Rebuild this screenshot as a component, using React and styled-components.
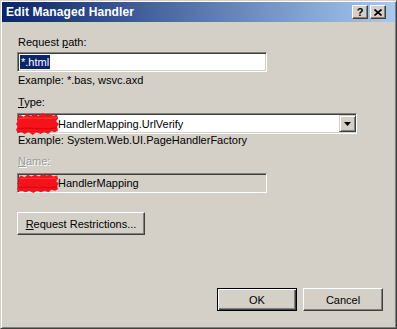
import React from 'react';
import styled, { createGlobalStyle } from 'styled-components';

const FACE = '#d4d0c8';

const GlobalStyle = createGlobalStyle`
  body {
    margin: 0;
    background: ${FACE};
    font-family: "Liberation Sans", Arial, sans-serif;
    font-size: 11px;
    color: #000;
  }
`;

const Window = styled.div`
  box-sizing: border-box;
  width: 397px;
  height: 329px;
  display: flex;
  flex-direction: column;
  background: ${FACE};
  border: 1px solid;
  border-color: ${FACE} #404040 #404040 ${FACE};
  box-shadow: inset 1px 1px #fff, inset -1px -1px #808080;
  padding: 1px;
`;

const TitleBar = styled.div`
  height: 20px;
  display: flex;
  align-items: center;
  justify-content: space-between;
  padding: 0 9px 0 4px;
  background: linear-gradient(to right, #0a246a, #a6caf0);
`;

const TitleText = styled.div`
  color: #fff;
  font-weight: bold;
  font-size: 12px;
  letter-spacing: 0.1px;
`;

const CaptionButtons = styled.div`
  display: flex;
  gap: 2px;
`;

const CaptionButton = styled.div`
  box-sizing: border-box;
  width: 16px;
  height: 14px;
  display: flex;
  align-items: center;
  justify-content: center;
  background: ${FACE};
  border: 1px solid;
  border-color: #fff #404040 #404040 #fff;
  box-shadow: inset -1px -1px #808080;
  font-weight: bold;
  font-size: 11px;
  line-height: 1;
`;

const Body = styled.div`
  flex: 1;
  display: flex;
  flex-direction: column;
  align-items: flex-start;
  padding: 14px 12px 16px 15px;
`;

const Label = styled.div`
  margin-top: ${(p) => p.$gap || 0}px;
  padding-left: 1px;
  height: 13px;
  line-height: 13px;
  color: ${(p) => (p.$disabled ? '#9a9a9a' : '#000')};
  text-shadow: ${(p) => (p.$disabled ? '1px 1px #fff' : 'none')};
`;

const Key = styled.span`
  text-decoration: underline;
`;

const Sunken = styled.div`
  position: relative;
  box-sizing: border-box;
  margin-top: ${(p) => p.$gap || 0}px;
  width: ${(p) => p.$width}px;
  height: ${(p) => p.$height || 20}px;
  display: flex;
  align-items: center;
  background: ${(p) => (p.$disabled ? FACE : '#fff')};
  border: 1px solid;
  border-color: #808080 #fff #fff #808080;
  box-shadow: inset 1px 1px #404040, inset -1px -1px ${FACE};
  padding-left: ${(p) => p.$indent || 2}px;
  white-space: nowrap;
`;

const Selection = styled.span`
  background: #0a246a;
  color: #fff;
  line-height: 14px;
  padding: 0 1px;
`;

const Hint = styled.div`
  margin-top: ${(p) => p.$gap || 0}px;
  padding-left: 1px;
  height: 13px;
  line-height: 13px;
`;

const ComboValue = styled.span`
  flex: 1;
`;

const DropButton = styled.div`
  box-sizing: border-box;
  width: 17px;
  height: 17px;
  display: flex;
  align-items: center;
  justify-content: center;
  background: ${FACE};
  border: 1px solid;
  border-color: ${FACE} #404040 #404040 ${FACE};
  box-shadow: inset 1px 1px #fff, inset -1px -1px #808080;
`;

const Redaction = styled.svg`
  position: absolute;
  left: ${(p) => p.$left}px;
  top: ${(p) => p.$top}px;
`;

const Button = styled.button`
  box-sizing: border-box;
  margin-top: ${(p) => p.$gap || 0}px;
  width: ${(p) => p.$width}px;
  height: 23px;
  padding: 0;
  font-family: inherit;
  font-size: 11px;
  color: #000;
  background: ${FACE};
  border: 1px solid;
  border-color: ${(p) => (p.$default ? '#000' : '#fff #404040 #404040 #fff')};
  box-shadow: ${(p) =>
    p.$default
      ? 'inset 1px 1px #fff, inset -1px -1px #404040, inset -2px -2px #808080'
      : 'inset -1px -1px #808080'};
`;

const Footer = styled.div`
  margin-top: auto;
  align-self: flex-end;
  display: flex;
  gap: 6px;
`;

// red marker scribble hiding the namespace prefix
const Scribble = ({ left, top, width, height }) => (
  <Redaction $left={left} $top={top} width={width} height={height} viewBox="0 0 44 24" preserveAspectRatio="none">
    <path
      d="M1 6 L4 2 L8 4 L11 1 L15 3 L19 1 L23 3 L27 0 L31 2 L35 1 L38 3 L42 2 L43 6 L41 9 L44 12 L42 15 L43 19 L40 21 L36 20 L33 23 L29 21 L25 23 L21 21 L17 24 L13 21 L9 23 L5 21 L2 22 L0 18 L2 15 L0 12 L2 9 Z"
      fill="#f5121a"
    />
    <path d="M3 6 C12 4 24 7 41 5" stroke="#ff3b3b" strokeWidth="1.2" fill="none" />
    <path d="M2 17 C14 15 26 19 42 16" stroke="#e4000c" strokeWidth="1.2" fill="none" />
  </Redaction>
);

export default function App() {
  return (
    <>
      <GlobalStyle />
      <Window>
        <TitleBar>
          <TitleText>Edit Managed Handler</TitleText>
          <CaptionButtons>
            <CaptionButton>?</CaptionButton>
            <CaptionButton>
              <svg width="8" height="7" viewBox="0 0 8 7">
                <path d="M0.5 0.5 L7.5 6.5 M7.5 0.5 L0.5 6.5" stroke="#000" strokeWidth="1.6" />
              </svg>
            </CaptionButton>
          </CaptionButtons>
        </TitleBar>
        <Body>
          <Label>
            Request <Key>p</Key>ath:
          </Label>
          <Sunken $gap={3} $width={250}>
            <Selection>*.html</Selection>
          </Sunken>
          <Hint $gap={2}>Example: *.bas, wsvc.axd</Hint>

          <Label $gap={9}>
            <Key>T</Key>ype:
          </Label>
          <Sunken $gap={4} $width={340} $height={21} $indent={40}>
            <ComboValue>HandlerMapping.UrlVerify</ComboValue>
            <DropButton>
              <svg width="7" height="4" viewBox="0 0 7 4">
                <path d="M0 0 H7 L3.5 4 Z" fill="#000" />
              </svg>
            </DropButton>
            <Scribble left={-2} top={-1} width={43} height={22} />
          </Sunken>
          <Hint>Example: System.Web.UI.PageHandlerFactory</Hint>

          <Label $gap={8} $disabled>
            <Key>N</Key>ame:
          </Label>
          <Sunken $gap={5} $width={250} $disabled $indent={40}>
            HandlerMapping
            <Scribble left={-1} top={0} width={42} height={19} />
          </Sunken>

          <Button $gap={19} $width={128}>
            <Key>R</Key>equest Restrictions...
          </Button>

          <Footer>
            <Button $width={80} $default>
              OK
            </Button>
            <Button $width={80}>Cancel</Button>
          </Footer>
        </Body>
      </Window>
    </>
  );
}
